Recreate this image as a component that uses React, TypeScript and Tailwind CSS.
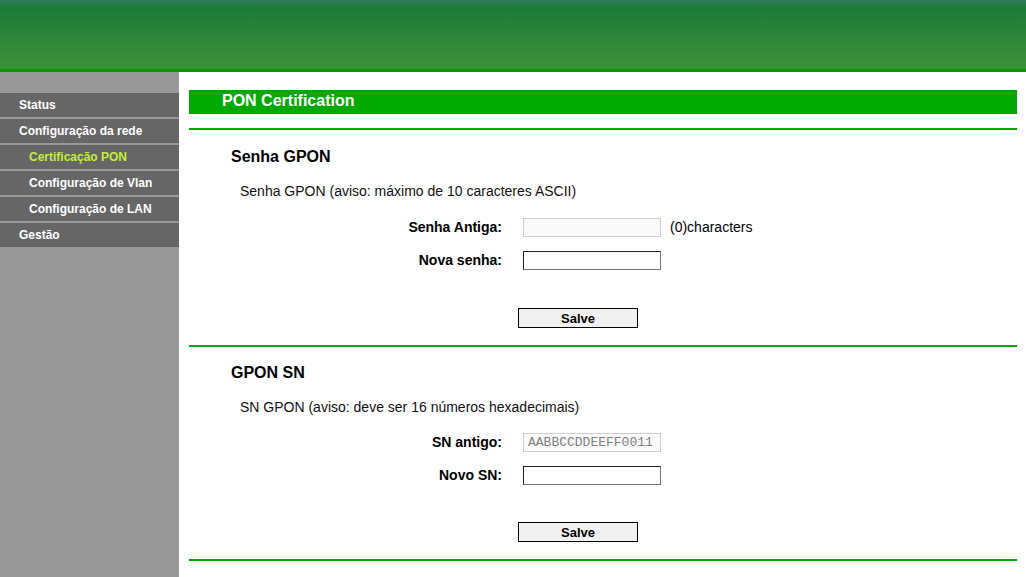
import React from 'react';

const menu = [
  { label: 'Status', sub: false },
  { label: 'Configuração da rede', sub: false },
  { label: 'Certificação PON', sub: true, active: true },
  { label: 'Configuração de Vlan', sub: true },
  { label: 'Configuração de LAN', sub: true },
  { label: 'Gestão', sub: false },
];

function Field({ label, value, disabled, note }: { label: string; value?: string; disabled?: boolean; note?: string }) {
  return (
    <div className="flex items-center h-[19px]">
      <div className="w-[313px] text-right text-[14px] font-bold text-black">{label}</div>
      <div
        className={
          disabled
            ? 'ml-[21px] w-[138px] h-[19px] border border-[#cccccc] bg-[#fafafa] pl-[4px] flex items-center text-[13px] text-[#808080] font-["Liberation_Mono",monospace]'
            : 'ml-[21px] w-[138px] h-[19px] border border-t-[#222] border-l-[#222] border-b-[#767676] border-r-[#767676] bg-white'
        }
      >
        {value}
      </div>
      {note && <span className="ml-[9px] text-[14px] text-black">{note}</span>}
    </div>
  );
}

function Section({ title, hint, rows, headGap, inputGap, btnGap }: {
  title: string;
  hint: string;
  rows: { label: string; value?: string; disabled?: boolean; note?: string }[];
  headGap: string;
  inputGap: string;
  btnGap: string;
}) {
  return (
    <div>
      <h2 className={headGap + ' pl-[42px] text-[16px] leading-[18px] font-bold text-black'}>{title}</h2>
      <p className="mt-[17px] pl-[51px] text-[14px] leading-[16px] text-[#111]">{hint}</p>
      <div className={inputGap}>
        <Field {...rows[0]} />
        <div className="mt-[14px]">
          <Field {...rows[1]} />
        </div>
      </div>
      <button className={btnGap + ' block ml-[329px] w-[120px] h-[20px] border border-black bg-[#f0f0f0] text-[13px] font-bold text-black leading-none'}>
        Salve
      </button>
      <div className="mt-[17px] h-[2px] bg-[#00aa00]" />
    </div>
  );
}

export default function App() {
  return (
    <div className="min-h-screen flex flex-col bg-white font-['Liberation_Sans',Arial,sans-serif]">
      <header className="h-[72px] border-b-[3px] border-[#009900] bg-[linear-gradient(to_bottom,#2f7e5c_0%,#1d7a3a_12%,#3e9238_100%)]" />
      <div className="flex flex-1">
        <aside className="w-[179px] shrink-0 bg-[#999999] pt-[21px]">
          <ul>
            {menu.map((m) => (
              <li
                key={m.label}
                className={
                  'h-[24px] mb-[2px] bg-[#666666] flex items-center text-[12px] font-bold ' +
                  (m.sub ? 'pl-[29px] ' : 'pl-[19px] ') +
                  (m.active ? 'text-[#c2ee3a]' : 'text-white')
                }
              >
                {m.label}
              </li>
            ))}
          </ul>
        </aside>
        <main className="flex-1 pl-[10px] pr-[9px] pt-[18px] pb-[16px]">
          <div className="h-[24px] bg-[#00aa00] pl-[33px] text-[16px] leading-[21px] font-bold text-white">
            PON Certification
          </div>
          <div className="mt-[14px] h-[2px] bg-[#00aa00]" />
          <Section
            title="Senha GPON"
            hint="Senha GPON (aviso: máximo de 10 caracteres ASCII)"
            headGap="mt-[18px]"
            inputGap="mt-[19px]"
            btnGap="mt-[38px]"
            rows={[
              { label: 'Senha Antiga:', disabled: true, note: '(0)characters' },
              { label: 'Nova senha:' },
            ]}
          />
          <Section
            title="GPON SN"
            hint="SN GPON (aviso: deve ser 16 números hexadecimais)"
            headGap="mt-[17px]"
            inputGap="mt-[18px]"
            btnGap="mt-[37px]"
            rows={[
              { label: 'SN antigo:', disabled: true, value: 'AABBCCDDEEFF0011' },
              { label: 'Novo SN:' },
            ]}
          />
        </main>
      </div>
    </div>
  );
}
